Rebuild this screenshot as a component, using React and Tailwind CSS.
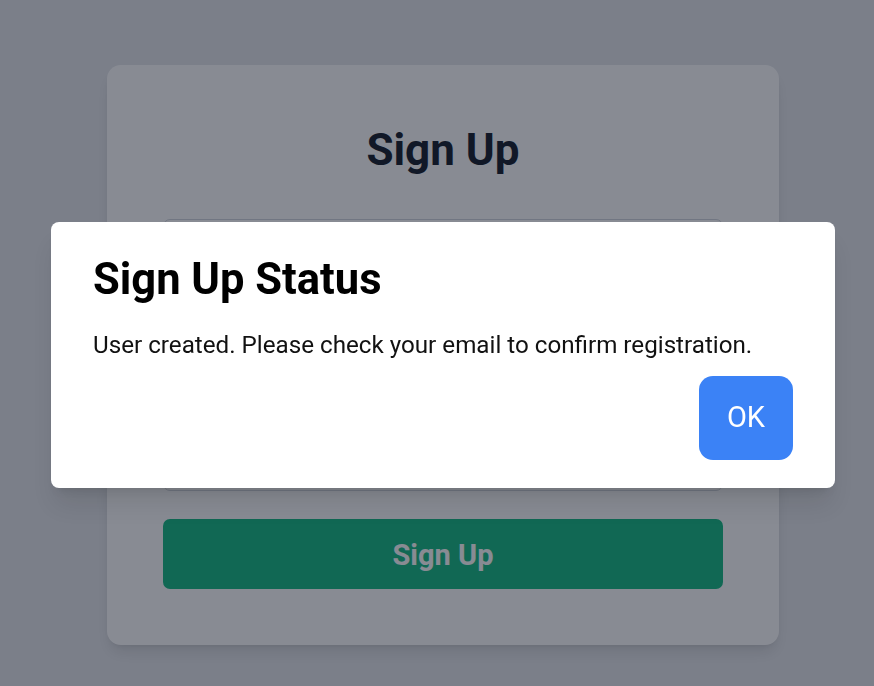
import React, { useState } from "react";

const font = { fontFamily: "'Segoe UI', Roboto, 'Noto Sans', sans-serif" };

const App = () => {
  const [open, setOpen] = useState(true);

  return (
    <div style={font} className="relative min-h-screen bg-[#e5e7eb] pt-[65px] pl-[107px]">
      {/* Sign up card */}
      <div className="w-[672px] rounded-[14px] bg-white p-[56px] shadow-lg">
        <h1 className="text-center text-[44px] leading-[58px] font-bold text-[#111827]">Sign Up</h1>
        <div className="mt-[40px] flex flex-col gap-[28px]">
          <input
            className="h-[70px] w-full rounded-[7px] border border-gray-300 px-4"
            placeholder="Email"
          />
          <input
            className="h-[70px] w-full rounded-[7px] border border-gray-300 px-4"
            placeholder="Password"
          />
          <input
            className="h-[76px] w-full rounded-[7px] border border-gray-300 px-4"
            placeholder="Confirm password"
          />
        </div>
        <button className="mt-[28px] h-[70px] w-full rounded-[7px] bg-[#10b981] pt-[3px] text-[29px] font-bold text-white">
          Sign Up
        </button>
      </div>

      {open && (
        <>
          <div className="fixed inset-0 bg-[#111827]/50" />
          <div className="fixed left-[51px] top-[222px] w-[784px] rounded-[8px] bg-white px-[42px] pt-[30px] pb-[28px] shadow-xl">
            <h2 className="text-[43.5px] leading-[56px] font-bold text-black">Sign Up Status</h2>
            <p className="mt-[19px] text-[24.2px] leading-[36px] text-[#111]">
              User created. Please check your email to confirm registration.
            </p>
            <div className="mt-[13px] flex justify-end">
              <button
                onClick={() => setOpen(false)}
                className="h-[84px] w-[94px] rounded-[14px] bg-[#3b82f6] text-[29px] text-white"
              >
                OK
              </button>
            </div>
          </div>
        </>
      )}
    </div>
  );
};

export default App;
